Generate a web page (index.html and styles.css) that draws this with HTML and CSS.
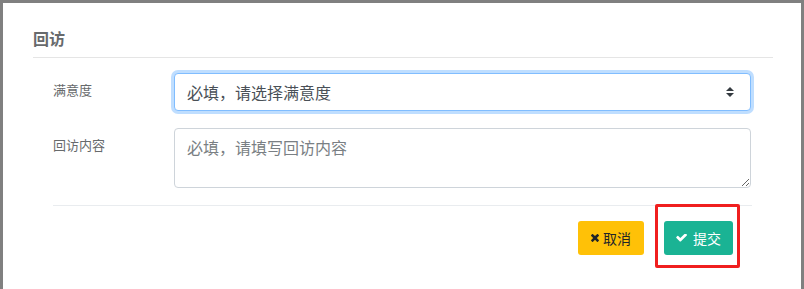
FILE: index.html
```html
<!DOCTYPE html>
<html lang="zh-CN">
<head>
<meta charset="utf-8">
<title>回访</title>
<link rel="stylesheet" href="styles.css">
</head>
<body>
<div class="modal">
  <div class="modal-header">
    <h4 class="modal-title">回访</h4>
  </div>
  <div class="modal-body">
    <div class="form-row">
      <label class="col-label">满意度</label>
      <div class="select-field">
        <span class="select-text">必填，请选择满意度</span>
        <svg class="select-arrow" width="8" height="10" viewBox="0 0 8 10"><path d="M0 4 L4 0 L8 4 Z M0 6 L8 6 L4 10 Z" fill="#343a40"/></svg>
      </div>
    </div>
    <div class="form-row">
      <label class="col-label">回访内容</label>
      <textarea class="textarea-field" rows="2" placeholder="必填，请填写回访内容"></textarea>
    </div>
  </div>
  <div class="modal-footer">
    <button class="btn btn-warning">
      <svg class="icon-close" width="8" height="8" viewBox="110 382 1188 1172"><path d="M1298 1322q0 40-28 68l-136 136q-28 28-68 28t-68-28l-294-294-294 294q-28 28-68 28t-68-28l-136-136q-28-28-28-68t28-68l294-294-294-294q-28-28-28-68t28-68l136-136q28-28 68-28t68 28l294 294 294-294q28-28 68-28t68 28l136 136q28 28 28 68t-28 68l-294 294 294 294q28 28 28 68z" fill="#212529"/></svg>
      <span>取消</span>
    </button>
    <button class="btn btn-primary">
      <svg class="icon-check" width="11" height="9" viewBox="93 430 1578 1290"><path d="M1671 566q0 40-28 68l-724 724-136 136q-28 28-68 28t-68-28l-136-136-362-362q-28-28-28-68t28-68l136-136q28-28 68-28t68 28l294 295 656-657q28-28 68-28t68 28l136 136q28 28 28 68z" fill="#ffffff"/></svg>
      <span>提交</span>
    </button>
    <div class="highlight-box"></div>
  </div>
</div>
</body>
</html>
```

FILE: styles.css
```css
html, body {
  margin: 0;
  padding: 0;
}

body {
  background: #808080;
  height: 289px;
  overflow: hidden;
  font-family: "Noto Sans CJK SC", "Noto Sans", "Liberation Sans", sans-serif;
}

.modal {
  margin: 3px 0 0 3px;
  width: 798px;
  height: 286px;
  background: #ffffff;
  box-sizing: border-box;
}

.modal-header {
  margin: 0 28px 0 30px;
  padding: 23px 0 7px;
  border-bottom: 1px solid #e5e5e5;
}

.modal-title {
  margin: 0;
  font-size: 16px;
  line-height: 24px;
  font-weight: 600;
  color: #676a6c;
}

.modal-body {
  margin-left: 50px;
  width: 699px;
  padding-top: 15px;
  border-bottom: 1px solid #e9ecef;
}

.form-row {
  display: flex;
  align-items: flex-start;
  margin-bottom: 17px;
}

.col-label {
  width: 121px;
  flex: none;
  padding-top: 7px;
  font-size: 13px;
  line-height: 20px;
  color: #676a6c;
}

.select-field {
  width: 577px;
  height: 38px;
  box-sizing: border-box;
  border: 1px solid #80bdff;
  border-radius: 4px;
  box-shadow: 0 0 0 3px rgba(0, 123, 255, 0.25);
  padding: 0 16px 0 12px;
  display: flex;
  align-items: center;
  justify-content: space-between;
  background: #fff;
}

.select-text {
  font-size: 16px;
  line-height: 24px;
  color: #495057;
}

.select-arrow {
  display: block;
}

.textarea-field {
  display: block;
  width: 577px;
  height: 60px;
  box-sizing: border-box;
  margin: 0;
  border: 1px solid #ced4da;
  border-radius: 4px;
  padding: 6px 12px;
  font-family: "Noto Sans CJK SC", "Noto Sans", "Liberation Sans", sans-serif;
  font-size: 16px;
  line-height: 24px;
  color: #495057;
  outline: none;
}

.textarea-field::placeholder {
  color: #7a7f84;
  opacity: 1;
}

.modal-footer {
  position: relative;
  margin-left: 50px;
  width: 699px;
  padding: 15px 19px 15px 0;
  display: flex;
  justify-content: flex-end;
  gap: 20px;
  box-sizing: border-box;
}

.btn {
  height: 34px;
  border: none;
  border-radius: 3px;
  display: flex;
  align-items: center;
  justify-content: center;
  white-space: nowrap;
  padding: 0;
  font-family: "Noto Sans CJK SC", "Noto Sans", "Liberation Sans", sans-serif;
  font-size: 14px;
  line-height: 20px;
  cursor: pointer;
}

.btn-warning {
  background: #ffc107;
  color: #212529;
  width: 66px;
  gap: 4px;
}

.btn-primary {
  background: #1ab394;
  color: #ffffff;
  width: 69px;
  gap: 6px;
}

.btn svg {
  display: block;
  flex: none;
}

.highlight-box {
  position: absolute;
  left: 602px;
  top: -2px;
  width: 79px;
  height: 58px;
  border: 3px solid #f01f1f;
  border-radius: 2px;
  pointer-events: none;
}
```
